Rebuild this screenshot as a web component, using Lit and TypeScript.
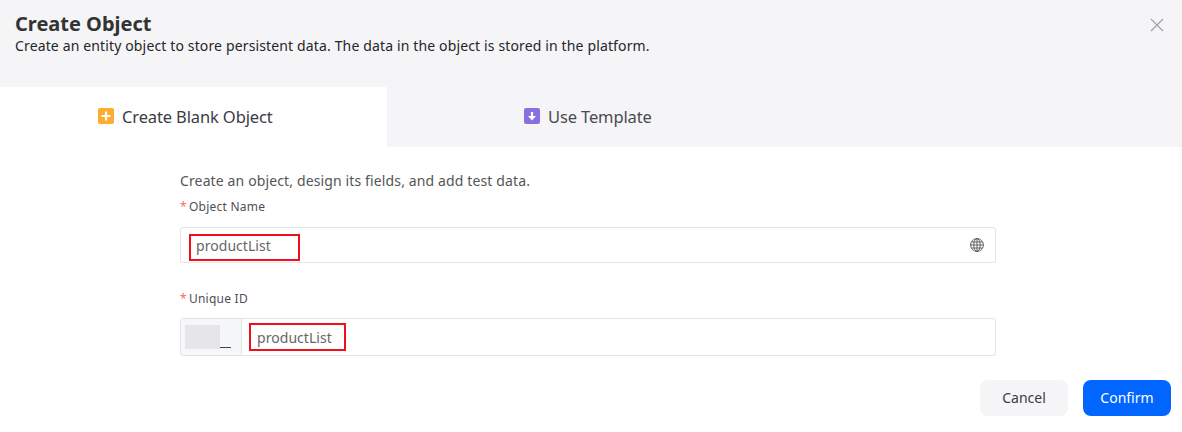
import { LitElement, html, css } from "lit";
import { customElement } from "lit/decorators.js";

@customElement("app-root")
export class AppRoot extends LitElement {
  static styles = css`
    :host { display: block; width: 1182px; height: 432px; background: #fff; overflow: hidden; font-family: "Noto Sans", "Open Sans", sans-serif; color: #333; }
    .head { height: 87px; box-sizing: border-box; background: #f5f5f7; padding: 10px 15px 0; display: flex; justify-content: space-between; align-items: flex-start; }
    h1 { margin: 0; font-size: 20px; line-height: 28px; font-weight: 700; color: #333; }
    .sub { margin: -1px 0 0; font-size: 14px; line-height: 17px; color: #262626; letter-spacing: 0.14px; }
    .close { margin: 8px 3px 0 0; width: 14px; height: 14px; display: block; }
    .tabs { display: flex; height: 60px; background: #f5f5f7; }
    .tab { display: flex; align-items: center; font-size: 16.5px; color: #3b3b44; gap: 8px; letter-spacing: -0.13px; padding-bottom: 2px; box-sizing: border-box; }
    .tab.on { width: 387px; background: #fff; padding-left: 98px; }
    .tab.off { padding-left: 137px; color: #4a4a52; }
    .ic { width: 16px; height: 16px; display: block; flex: none; }
    .form { width: 816px; margin: 23px 0 0 180px; }
    .intro { font-size: 14px; line-height: 22px; color: #555; letter-spacing: 0.13px; }
    .label { font-size: 12px; line-height: 18px; color: #4f4f57; display: flex; gap: 2px; margin-top: 6px; letter-spacing: 0.25px; }
    .star { color: #f66; }
    .field { display: flex; align-items: center; box-sizing: border-box; border: 1px solid #e2e2e8; border-radius: 3px; margin-top: 11px; font-size: 14px; color: #666; }
    .name { height: 36px; padding: 0 11px 0 8px; justify-content: space-between; margin-bottom: 27px; }
    .id { height: 38px; margin-top: 10px; }
    .mark { border: 2px solid #f0101c; box-sizing: border-box; display: flex; align-items: center; }
    .name .mark { width: 111px; height: 27px; padding: 0 0 4px 5px; margin-top: 4px; letter-spacing: 0.05px; }
    .id .mark { width: 97px; height: 28px; padding-left: 6px; margin-left: 7px; letter-spacing: 0.05px; }
    .prefix { width: 61px; align-self: stretch; box-sizing: border-box; background: #f5f7fa; border-right: 1px solid #e2e2e8; border-radius: 3px 0 0 3px; display: flex; align-items: center; padding-left: 4px; }
    .blur { width: 35px; height: 24px; background: #e6e6e9; }
    .under { width: 11px; height: 1px; background: #444; align-self: flex-end; margin-bottom: 7px; }
    .foot { display: flex; justify-content: flex-end; gap: 15px; padding: 24px 11px 0 0; }
    .btn { width: 88px; height: 36px; border-radius: 8px; display: flex; align-items: center; justify-content: center; font-size: 14px; padding-bottom: 1px; box-sizing: border-box; }
    .cancel { background: #f5f5f7; color: #3b3b44; }
    .ok { background: #0066ff; color: #fff; }
    .globe { width: 14px; height: 14px; display: block; }
  `;
  render() {
    return html`
      <div class="head">
        <div>
          <h1>Create Object</h1>
          <p class="sub">Create an entity object to store persistent data. The data in the object is stored in the platform.</p>
        </div>
        <svg class="close" viewBox="0 0 14 14" fill="none" stroke="#a0a0aa" stroke-width="1.2"><path d="M1 1l12 12M13 1L1 13"/></svg>
      </div>
      <div class="tabs">
        <div class="tab on">
          <svg class="ic" viewBox="0 0 16 16"><rect width="16" height="16" rx="2" fill="#ffab30"/><path d="M8 3.5v9M3.5 8h9" stroke="#fff" stroke-width="2.2"/></svg>
          Create Blank Object
        </div>
        <div class="tab off">
          <svg class="ic" viewBox="0 0 16 16"><rect width="16" height="16" rx="2" fill="#8a6fe0"/><path d="M8 4v5" stroke="#fff" stroke-width="2.2"/><path d="M4 8l4 4.5L12 8z" fill="#fff"/></svg>
          Use Template
        </div>
      </div>
      <div class="form">
        <div class="intro">Create an object, design its fields, and add test data.</div>
        <div class="label"><span class="star">*</span>Object Name</div>
        <div class="field name">
          <div class="mark">productList</div>
          <svg class="globe" viewBox="0 0 14 14" fill="none" stroke="#555" stroke-width="0.9"><circle cx="7" cy="7" r="6.4"/><ellipse cx="7" cy="7" rx="3.2" ry="6.4"/><path d="M7 .6v12.8M.6 7h12.8M1.4 4h11.2M1.4 10h11.2"/></svg>
        </div>
        <div class="label"><span class="star">*</span>Unique ID</div>
        <div class="field id">
          <div class="prefix"><div class="blur"></div><div class="under"></div></div>
          <div class="mark">productList</div>
        </div>
      </div>
      <div class="foot">
        <div class="btn cancel">Cancel</div>
        <div class="btn ok">Confirm</div>
      </div>
    `;
  }
}
